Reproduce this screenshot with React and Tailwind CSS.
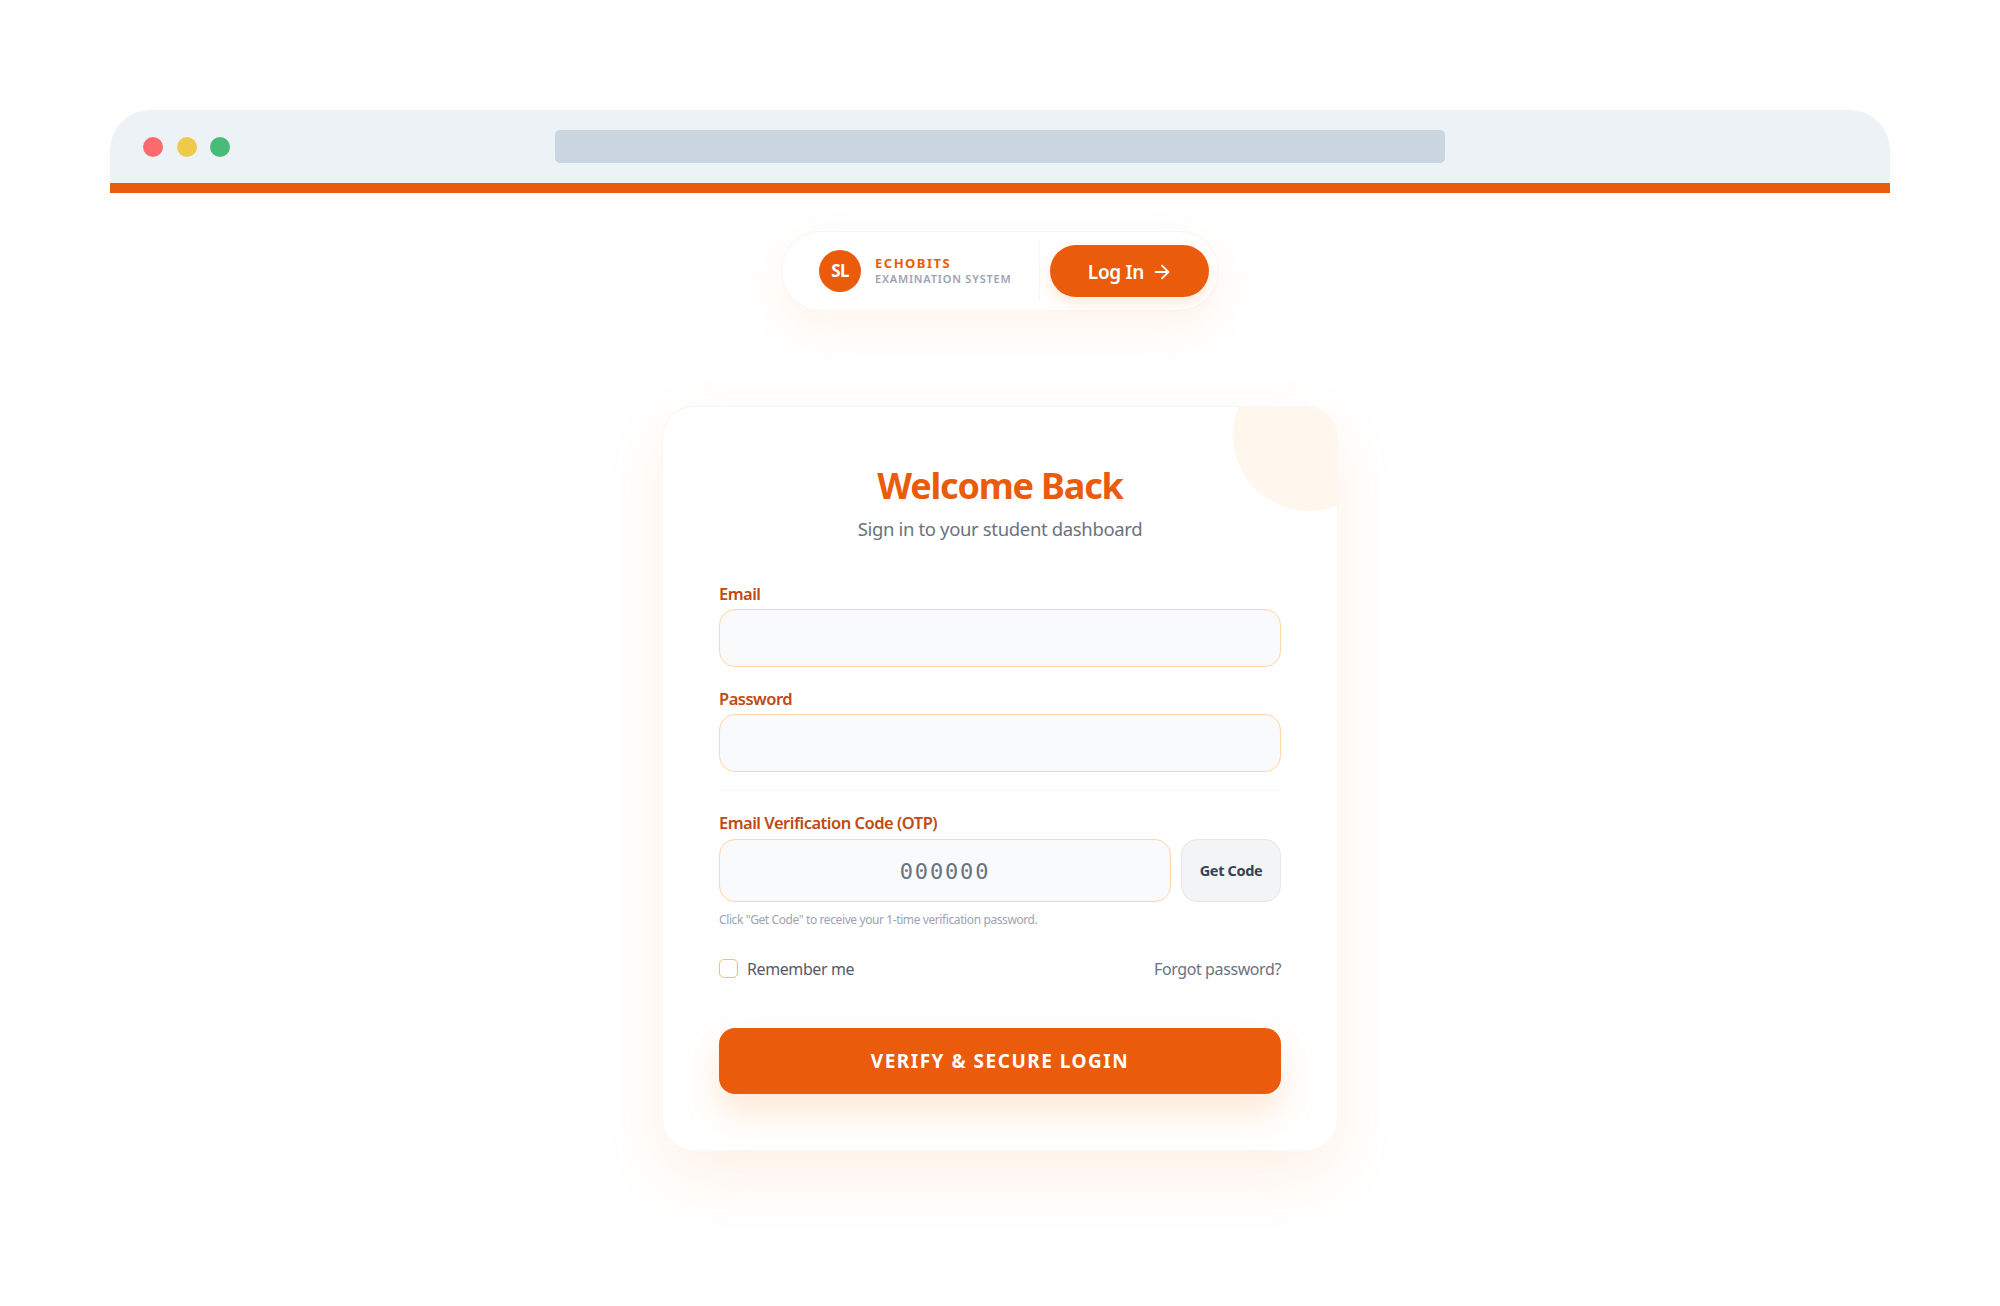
import React from 'react';
import { ArrowRight } from 'lucide-react';

const Field = ({ label, className = '' }) => (
  <div className={className}>
    <label className="block text-[16.5px] leading-[24px] font-semibold text-[#c04a12] tracking-[-0.5px] mb-[3px]">{label}</label>
    <div className="h-[58px] rounded-[16px] border border-[#fed7aa] bg-[#f8fafc]" />
  </div>
);

const BrowserBar = () => (
  <div className="relative h-[83px] rounded-t-[40px] bg-[#edf2f7] border-b-[10px] border-[#ea5b0c] flex items-center justify-center">
    <div className="absolute left-[33px] top-[27px] flex gap-[13.5px]">
      <span className="w-[20px] h-[20px] rounded-full bg-[#fc6a6e]" />
      <span className="w-[20px] h-[20px] rounded-full bg-[#eeca4b]" />
      <span className="w-[20px] h-[20px] rounded-full bg-[#48bb78]" />
    </div>
    <div className="w-[890px] h-[33px] rounded-[5px] bg-[#cbd5e0]" />
  </div>
);

const NavPill = () => (
  <div className="w-[438px] h-[80px] mx-auto mt-[38px] rounded-full bg-white border border-[#f8f6f4] shadow-[0_16px_44px_rgba(251,146,60,0.1)] flex items-center pl-[37px]">
    <div className="w-[42px] h-[42px] rounded-full bg-[#ea5b0c] flex items-center justify-center text-white font-bold text-[17px] tracking-[-0.8px]">SL</div>
    <div className="ml-[14px] w-[164px] mt-[-1px]">
      <div className="text-[13px] leading-[16px] font-bold tracking-[1.5px] text-[#ea5b0c]">ECHOBITS</div>
      <div className="text-[11px] leading-[16px] font-semibold tracking-[0.8px] text-[#9ca3af] whitespace-nowrap">EXAMINATION SYSTEM</div>
    </div>
    <div className="w-px h-[60px] bg-[#f7f5f3]" />
    <button className="ml-[10px] w-[159px] h-[52px] rounded-full bg-[#ea5b0c] shadow-[0_6px_14px_rgba(251,146,60,0.2)] text-white font-semibold text-[19px] tracking-[-0.3px] flex items-center justify-center gap-[7px] pl-[2px] pt-[2px]">
      Log In <ArrowRight size={22} strokeWidth={2} />
    </button>
  </div>
);

export default function App() {
  return (
    <div className="min-h-[1306px] bg-white pt-[110px] px-[110px] font-['Noto_Sans','Open_Sans',sans-serif]">
      <BrowserBar />
      <NavPill />

      <div className="relative w-[676px] h-[745px] mx-auto mt-[95px] rounded-[32px] bg-white border border-[#faf8f5] shadow-[0_25px_60px_rgba(251,146,60,0.13)] overflow-hidden px-[56px] pt-[55px]">
        <div className="absolute right-[-48px] top-[-48px] w-[152px] h-[152px] rounded-full bg-[#fff7ed]" />

        <div className="relative text-center">
          <h1 className="text-[36px] leading-[48px] font-bold text-[#ea5b0c] tracking-[-1.2px]">Welcome Back</h1>
          <p className="mt-[7px] text-[18.5px] leading-[26px] text-[#6b7280] tracking-[-0.35px] -translate-y-px">Sign in to your student dashboard</p>
        </div>

        <Field label="Email" className="mt-[39px] relative" />
        <Field label="Password" className="mt-[20px] relative" />

        <div className="h-px bg-[#fff7ed] mt-[18px]" />

        <div className="mt-[20px] relative">
          <label className="block text-[16.5px] leading-[24px] font-semibold text-[#c04a12] tracking-[-0.5px] mb-[4px]">Email Verification Code (OTP)</label>
          <div className="flex gap-[10px]">
            <div className="flex-1 h-[63px] rounded-[16px] border border-[#fed7aa] bg-[#f8fafc] flex items-center justify-center font-['DejaVu_Sans_Mono','Liberation_Mono',monospace] text-[22px] tracking-[1.85px] text-[#6b7280] pt-[2px]">000000</div>
            <button className="w-[100px] h-[63px] rounded-[16px] border border-[#e5e7eb] bg-[#f3f4f6] text-[14.5px] font-bold text-[#374151] tracking-[-0.35px]">Get Code</button>
          </div>
          <p className="mt-[9px] text-[12px] leading-[17px] text-[#9ca3af] tracking-[-0.4px]">Click "Get Code" to receive your 1-time verification password.</p>
        </div>

        <div className="mt-[29px] flex items-center justify-between">
          <label className="flex items-center gap-[9px] text-[16px] leading-[24px] text-[#555b66] tracking-[-0.4px]">
            <span className="w-[19px] h-[19px] rounded-[5px] border border-[#fdba74] bg-white -translate-y-px" />
            Remember me
          </label>
          <a className="text-[16px] leading-[24px] text-[#6b7280] tracking-[-0.4px]">Forgot password?</a>
        </div>

        <button className="mt-[47px] w-full h-[66px] rounded-[16px] bg-[#ea5b0c] shadow-[0_18px_36px_rgba(251,146,60,0.22)] text-white text-[19px] font-bold tracking-[1.5px]">VERIFY &amp; SECURE LOGIN</button>
      </div>
    </div>
  );
}
